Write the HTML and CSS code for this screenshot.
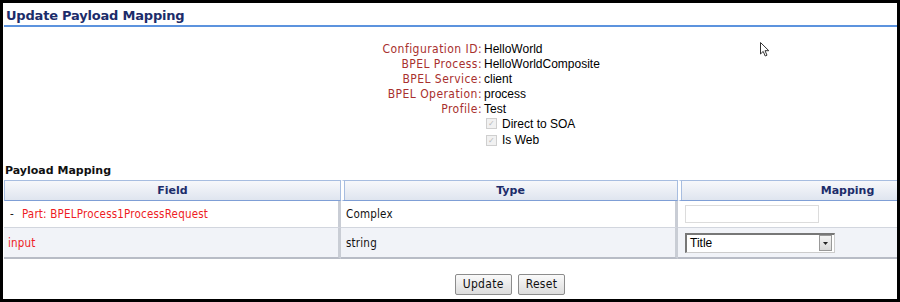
FILE: index.html
```html
<!DOCTYPE html>
<html>
<head>
<meta charset="utf-8">
<link rel="stylesheet" href="styles.css">
</head>
<body>
<div class="frame">
  <svg class="cursor" width="10" height="16" viewBox="0 0 10 16"><path d="M0.5 0.5 L0.5 12 L3.2 9.4 L5.2 14 L7 13.2 L5 8.7 L8.8 8.7 Z" fill="#fff" stroke="#333" stroke-width="1"/></svg>
  <h1 class="title">Update Payload Mapping</h1>
  <div class="page">
    <div class="info">
      <div class="lbl">Configuration ID:</div><div class="val">HelloWorld</div>
      <div class="lbl">BPEL Process:</div><div class="val">HelloWorldComposite</div>
      <div class="lbl">BPEL Service:</div><div class="val">client</div>
      <div class="lbl">BPEL Operation:</div><div class="val">process</div>
      <div class="lbl">Profile:</div><div class="val">Test</div>
      <div class="lbl"></div><div class="chk"><span class="box">✓</span>Direct to SOA</div>
      <div class="lbl"></div><div class="chk"><span class="box">✓</span>Is Web</div>
    </div>
    <div class="section">Payload Mapping</div>
    <table class="map">
      <thead>
        <tr><th>Field</th><th>Type</th><th>Mapping</th></tr>
      </thead>
      <tbody>
        <tr class="r1">
          <td class="red"><span class="dash">-</span>Part: BPELProcess1ProcessRequest</td>
          <td>Complex</td>
          <td><span class="textbox"></span></td>
        </tr>
        <tr class="r2">
          <td class="red">input</td>
          <td>string</td>
          <td><span class="select"><span class="sel-text">Title</span><span class="sel-btn"><svg width="5" height="3" viewBox="0 0 5 3"><path d="M0 0 H5 L2.5 3 Z" fill="#222"/></svg></span></span></td>
        </tr>
      </tbody>
    </table>
    <div class="actions">
      <span class="btn">Update</span><span class="btn">Reset</span>
    </div>
  </div>
</div>
</body>
</html>
```
FILE: styles.css
```css
html, body {
  margin: 0;
  padding: 0;
  background: #000;
}
.frame {
  position: relative;
  width: 900px;
  height: 302px;
  box-sizing: border-box;
  border: 3px solid #000;
  background: #fff;
  overflow: hidden;
  font-family: "DejaVu Sans Condensed", "DejaVu Sans", sans-serif;
  font-size: 11.5px;
}
.cursor {
  position: absolute;
  left: 757px;
  top: 39px;
}
.title {
  margin: 0 0 0 1px;
  padding: 5px 0 2px 2px;
  font-family: "DejaVu Sans", sans-serif;
  font-size: 13px;
  font-weight: bold;
  color: #1c2c6a;
  border-bottom: 2px solid #5c93de;
  line-height: 15px;
  letter-spacing: -0.2px;
}
.page {
  width: 1012px;
  margin-left: 1px;
}
.info {
  display: grid;
  grid-template-columns: 478px auto;
  grid-auto-rows: 15px;
  margin-top: 14px;
  align-items: center;
}
.lbl {
  text-align: right;
  color: #a8302e;
  font-size: 12px;
  letter-spacing: 0.45px;
}
.val {
  padding-left: 2px;
  font-family: "Liberation Sans", Arial, sans-serif;
  font-size: 12px;
  color: #000;
}
.chk {
  grid-column: 2;
  padding-left: 4px;
  font-family: "Liberation Sans", Arial, sans-serif;
  font-size: 12px;
  display: flex;
  align-items: center;
  height: 16px;
}
.info .chk:last-child { margin-top: 3px; }
.box {
  display: inline-block;
  width: 9px;
  height: 9px;
  border: 1px solid #cfcfcf;
  background: #f1f1f1;
  color: #b8b8b8;
  font-size: 8px;
  line-height: 9px;
  text-align: center;
  margin-right: 5px;
}
.section {
  margin-top: 18px;
  padding-left: 1px;
  font-family: "DejaVu Sans", sans-serif;
  font-weight: bold;
  font-size: 11px;
  color: #111;
  line-height: 14px;
}
.map {
  border-collapse: separate;
  border-spacing: 0;
  width: 1011px;
  margin-top: 2px;
  table-layout: fixed;
}
.map th {
  height: 19px;
  padding: 0;
  font-family: "DejaVu Sans", sans-serif;
  font-weight: bold;
  color: #1c2c6a;
  font-size: 11px;
  background: linear-gradient(#f7f8fb, #dfe5ef);
  border: 1px solid #a7bde0;
  border-bottom-color: #7f9fd6;
}
.map th + th { border-left: 3px solid #fff; box-shadow: inset 1px 0 0 #a7bde0; }
.map td {
  padding: 0 5px;
  color: #111;
  border-right: 3px solid #c9cdd5;
  letter-spacing: 0.2px;
}
.map td:last-child { border-right: 0; padding-left: 7px; }
.map td:first-child { padding-left: 6px; }
.r1 td {
  height: 26px;
  background: #fff;
  border-bottom: 1px solid #d2d6de;
}
.r2 td {
  height: 29px;
  background: #f1f3f8;
  border-bottom: 2px solid #b8bcc6;
}
.r2 td.red { padding-left: 4px; }
.red { color: #ee1c24 !important; }
.dash { margin-right: 8px; color: #222; }
.textbox {
  display: block;
  width: 132px;
  height: 16px;
  border: 1px solid #dcdcdc;
  background: #fff;
}
.select {
  display: flex;
  width: 150px;
  height: 20px;
  box-sizing: border-box;
  border: 1px solid #777;
  border-top-width: 2px;
  border-left-width: 2px;
  border-right-color: #ccc;
  border-bottom-color: #ccc;
  background: #fff;
  align-items: center;
  font-family: "Liberation Sans", Arial, sans-serif;
  font-size: 12px;
  letter-spacing: 0;
}
.sel-text { flex: 1; padding-left: 3px; color: #000; }
.sel-btn {
  width: 11px;
  height: 14px;
  margin-right: 2px;
  border: 1px solid #999;
  background: linear-gradient(#f4f4f4, #d8d8d8);
  display: flex;
  align-items: center;
  justify-content: center;
}
.actions {
  display: flex;
  justify-content: center;
  gap: 6px;
  margin-top: 15px;
}
.btn {
  display: inline-block;
  height: 19px;
  line-height: 19px;
  padding: 0 7px;
  border: 1px solid #8c8c8c;
  border-radius: 2px;
  background: linear-gradient(#fafafa, #dcdcdc);
  font-size: 12px;
  letter-spacing: 0.3px;
  color: #111;
}
```
